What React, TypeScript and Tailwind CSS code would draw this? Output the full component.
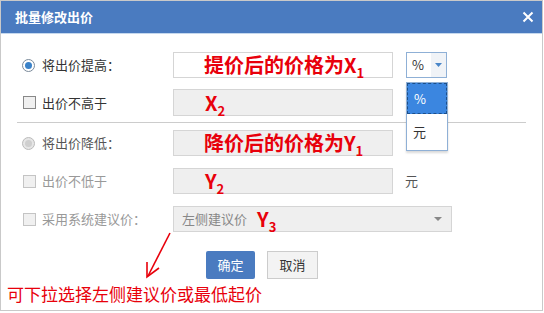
import React from "react";

const font = { fontFamily: '"Noto Sans CJK SC", "Noto Sans", sans-serif' };

function Radio({ active }: { active?: boolean }) {
  return (
    <div className={`w-[13px] h-[13px] rounded-full border flex items-center justify-center ${active ? "border-[#7a8a9a] bg-white" : "border-[#bbb] bg-[#e6e6e6]"}`}>
      {active ? <div className="w-[7px] h-[7px] rounded-full bg-[#3b82c8]" /> : <div className="w-[7px] h-[7px] rounded-full bg-[#cfcfcf]" />}
    </div>
  );
}

function Check({ dark }: { dark?: boolean }) {
  return <div className={`w-[13px] h-[13px] border ${dark ? "border-[#888]" : "border-[#c4c4c4]"} bg-[#f0f0f0]`} />;
}

function RedText({ main, sub }: { main: string; sub: string }) {
  return (
    <span className="text-[#e8000b] font-bold text-[20px] leading-none" style={font}>
      {main}
      <span className="text-[13px] relative top-[5px]">{sub}</span>
    </span>
  );
}

export default function App() {
  return (
    <div className="w-[544px] h-[313px] bg-white relative overflow-hidden" style={font}>
      <div className="w-[543px] h-[311px] border border-[#c9c9c9] bg-white flex flex-col">
        <div className="h-[33px] bg-[#4a7bc0] border-b border-[#c5d8ee] flex items-center justify-between pl-[14px] pr-[8px]">
          <span className="text-white font-bold text-[13px]">批量修改出价</span>
          <svg width="12" height="12" viewBox="0 0 12 12">
            <path d="M1.5 1.5L10.5 10.5M10.5 1.5L1.5 10.5" stroke="white" strokeWidth="2" />
          </svg>
        </div>
        <div className="flex flex-col pt-[18px]">
          {/* Row 1 */}
          <div className="flex items-center h-[26px]">
            <div className="w-[41px] pl-[21px] flex items-center"><Radio active /></div>
            <div className="w-[131px] text-[13px] text-[#333]">将出价提高：</div>
            <div className="w-[220px] h-[26px] border border-[#d5d5d5] bg-white flex items-center pl-[30px]">
              <RedText main="提价后的价格为X" sub="1" />
            </div>
            <div className="ml-[13px] w-[41px] h-[26px] border border-[#8fb0d6] bg-white flex items-center">
              <span className="text-[13px] text-[#333] pl-[5px] w-[24px]">%</span>
              <div className="flex-1 h-full bg-[#f0f3f7] flex items-center justify-center">
                <svg width="7" height="4" viewBox="0 0 7 4"><path d="M0 0H7L3.5 4Z" fill="#4a86c8" /></svg>
              </div>
            </div>
          </div>
          {/* Row 2 */}
          <div className="flex items-center h-[27px] mt-[11px]">
            <div className="w-[41px] pl-[22px] flex items-center"><Check dark /></div>
            <div className="w-[131px] text-[13px] text-[#333]">出价不高于</div>
            <div className="w-[220px] h-[27px] border border-[#d5d5d5] bg-[#efefef] flex items-center pl-[31px]">
              <RedText main="X" sub="2" />
            </div>
          </div>
          <div className="mx-[16px] mt-[6px] h-px bg-[#ccc]" />
          {/* Row 3 */}
          <div className="flex items-center h-[26px] mt-[7px]">
            <div className="w-[41px] pl-[21px] flex items-center"><Radio /></div>
            <div className="w-[131px] text-[13px] text-[#555]">将出价降低：</div>
            <div className="w-[220px] h-[26px] border border-[#d5d5d5] bg-[#efefef] flex items-center pl-[30px]">
              <RedText main="降价后的价格为Y" sub="1" />
            </div>
          </div>
          {/* Row 4 */}
          <div className="flex items-center h-[26px] mt-[12px]">
            <div className="w-[41px] pl-[22px] flex items-center"><Check /></div>
            <div className="w-[131px] text-[13px] text-[#999]">出价不低于</div>
            <div className="w-[220px] h-[26px] border border-[#d5d5d5] bg-[#efefef] flex items-center pl-[31px]">
              <RedText main="Y" sub="2" />
            </div>
            <span className="ml-[12px] text-[13px] text-[#555]">元</span>
          </div>
          {/* Row 5 */}
          <div className="flex items-center h-[26px] mt-[12px]">
            <div className="w-[41px] pl-[22px] flex items-center"><Check /></div>
            <div className="w-[131px] text-[13px] text-[#999]">采用系统建议价：</div>
            <div className="w-[279px] h-[26px] border border-[#d5d5d5] bg-[#efefef] flex items-center pl-[8px] pr-[9px]">
              <span className="text-[13px] text-[#888] mr-[10px]">左侧建议价</span>
              <RedText main="Y" sub="3" />
              <div className="flex-1" />
              <svg width="8" height="4" viewBox="0 0 8 4"><path d="M0 0H8L4 4Z" fill="#888" /></svg>
            </div>
          </div>
          {/* Buttons */}
          <div className="flex h-[28px] mt-[19px] pl-[205px] gap-[12px]">
            <div className="w-[49px] h-[28px] bg-[#4a7bc0] rounded-[2px] text-white text-[13px] flex items-center justify-center">确定</div>
            <div className="w-[51px] h-[28px] bg-[#f3f3f3] border border-[#ccc] text-[#333] text-[13px] flex items-center justify-center">取消</div>
          </div>
        </div>
      </div>
      {/* Dropdown list */}
      <div className="absolute left-[406px] top-[82px] w-[42px] h-[69px] bg-white border border-[#8fb0d6] shadow-[0_2px_2px_rgba(0,0,0,0.15)] flex flex-col">
        <div className="h-[31px] bg-[#3b86e0] border border-dashed border-[#1c4f8a] text-white text-[13px] flex items-center pl-[6px]">%</div>
        <div className="h-[35px] text-[#333] text-[13px] flex items-center pl-[6px]">元</div>
      </div>
      {/* Annotation arrow */}
      <svg className="absolute left-0 top-0" width="544" height="313" viewBox="0 0 544 313">
        <path d="M170 233L148 276" stroke="#e8000b" strokeWidth="1.6" fill="none" />
        <path d="M147 262L147 277L159 268" stroke="#e8000b" strokeWidth="1.6" fill="none" />
      </svg>
      <div className="absolute left-[7px] top-[282px] text-[#e8000b] text-[17px] leading-[24px]">可下拉选择左侧建议价或最低起价</div>
    </div>
  );
}
